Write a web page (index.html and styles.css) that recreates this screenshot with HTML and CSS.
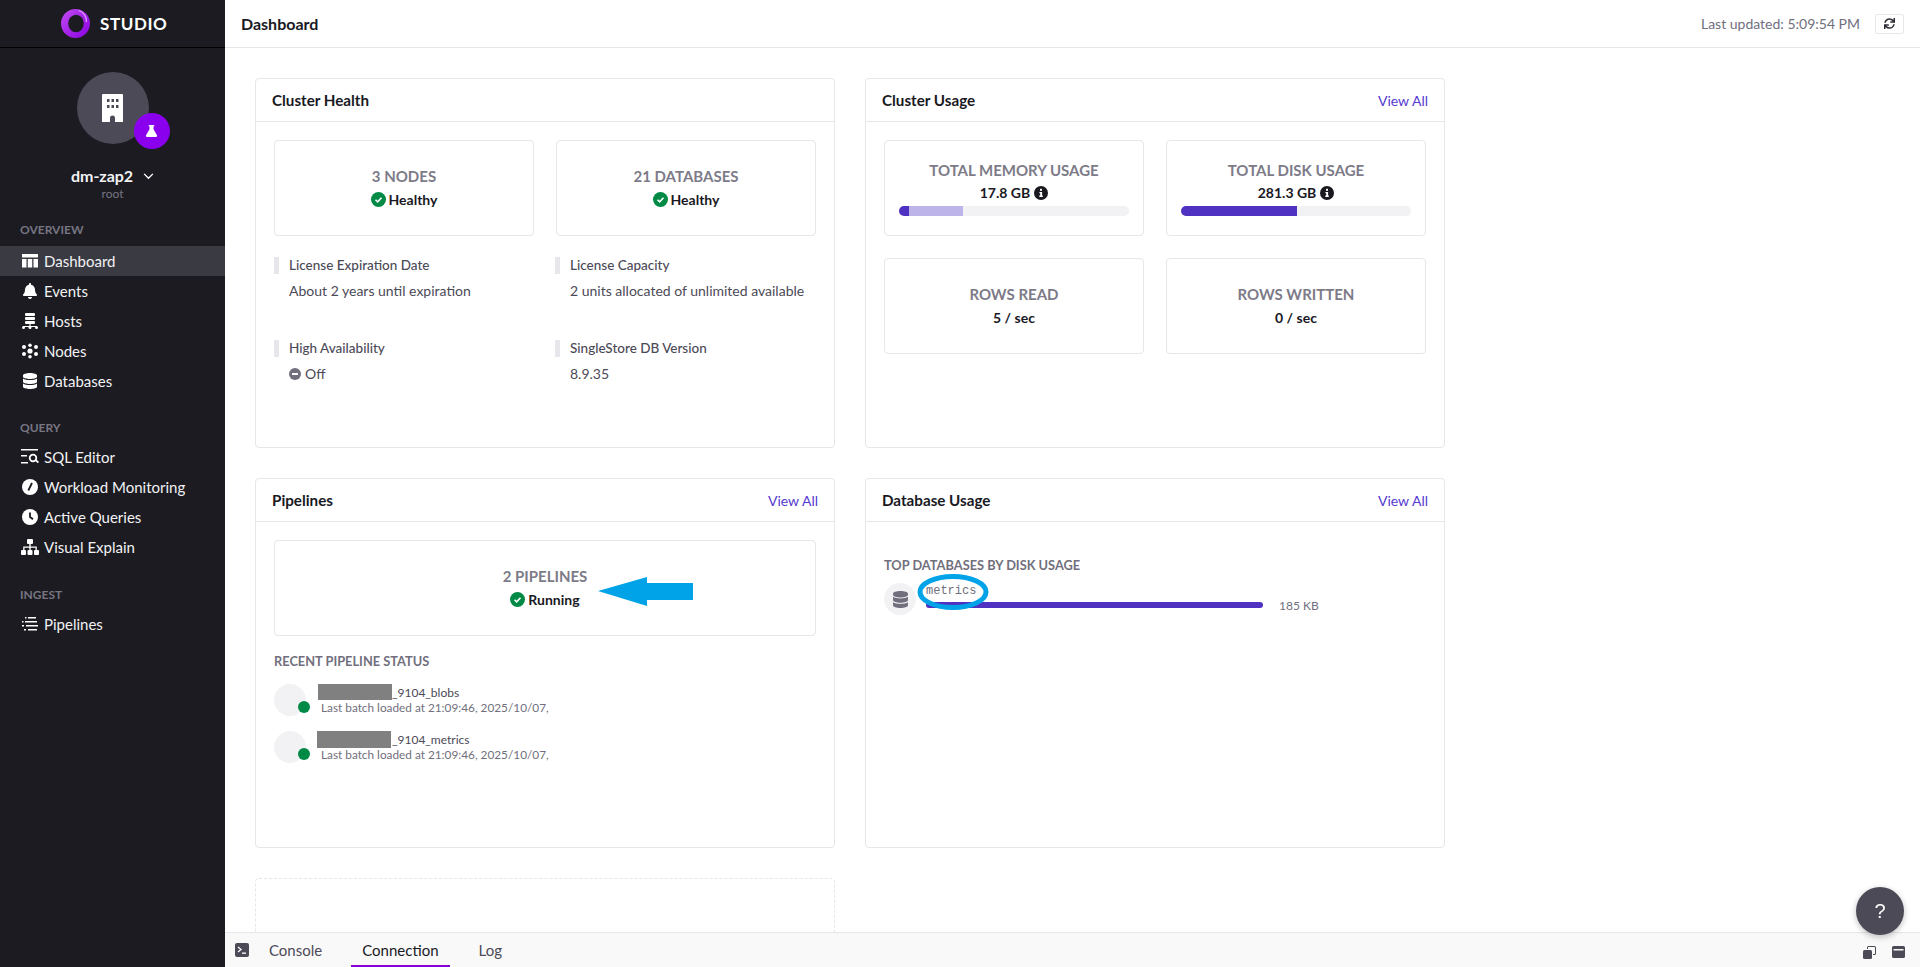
FILE: index.html
```html
<!DOCTYPE html>
<html lang="en">
<head>
    <meta charset="UTF-8">
    <title>Dashboard</title>
    <link rel="stylesheet" href="styles.css">
</head>
<body>
    <svg class="defs" width="0" height="0">
        <symbol id="i-db" viewBox="0 0 448 512"><path d="M448 73.143v45.714C448 159.143 347.667 192 224 192S0 159.143 0 118.857V73.143C0 32.857 100.333 0 224 0s224 32.857 224 73.143zM448 176v102.857C448 319.143 347.667 352 224 352S0 319.143 0 278.857V176c48.125 33.143 136.208 48.572 224 48.572S399.874 209.143 448 176zm0 160v102.857C448 479.143 347.667 512 224 512S0 479.143 0 438.857V336c48.125 33.143 136.208 48.572 224 48.572S399.874 369.143 448 336z"/></symbol>
        <symbol id="i-check" viewBox="0 0 14 14"><circle cx="7" cy="7" r="7" fill="#008a45"/><path d="M4.2 7.2l2 2 3.6-3.9" fill="none" stroke="#fff" stroke-width="1.5"/></symbol>
        <symbol id="i-info" viewBox="0 0 14 14"><circle cx="7" cy="7" r="7" fill="#19191f"/><rect x="6" y="2.8" width="2" height="2" fill="#fff"/><path d="M5.4 6h2.7v3.6h.7v1.3H5.3V9.6h.9V7.3h-.8z" fill="#fff"/></symbol>
    </svg>

    <aside class="sidebar">
        <div class="brand">
            <svg class="brand-logo" viewBox="0 0 28 28">
                <defs><linearGradient id="ring" x1="0" y1="0" x2="1" y2="1"><stop offset="0" stop-color="#c24cf2"/><stop offset="1" stop-color="#8a00e0"/></linearGradient></defs>
                <circle cx="14" cy="14" r="14" fill="url(#ring)"/>
                <ellipse cx="14.500" cy="14" rx="7.500" ry="8.500" fill="#1b1b21"/>
                <path d="M17 1.500c5 1.500 8 6 7.500 11" fill="none" stroke="#e3a6fa" stroke-width="1"/>
            </svg>
            <span class="brand-name">STUDIO</span>
        </div>
        <div class="cluster">
            <div class="avatar">
                <svg class="avatar-icon" viewBox="0 0 21 28" fill="#fff"><path fill-rule="evenodd" d="M1 0h19a1 1 0 0 1 1 1v27H13v-4a2.500 2.500 0 0 0-5 0v4H0V1a1 1 0 0 1 1-1zM5 5v3h2.500V5zm4.500 0v3H12V5zM14 5v3h2.500V5zM5 11v3h2.500v-3zm4.500 0v3H12v-3zm4.500 0v3h2.500v-3z"/></svg>
                <span class="avatar-badge">
                    <svg viewBox="0 0 12 13" width="11" height="12" fill="#fff"><path d="M3 0h6v1.300H8.200v3.400L12 11a1.400 1.400 0 0 1-1.200 2H1.200A1.400 1.400 0 0 1 0 11l3.800-6.300V1.300H3z"/></svg>
                </span>
            </div>
            <div class="cluster-name">dm-zap2
                <svg class="chevron" viewBox="0 0 12 8" width="11" height="7"><path d="M1 1l5 5 5-5" fill="none" stroke="#fff" stroke-width="1.600"/></svg>
            </div>
            <div class="cluster-user">root</div>
        </div>

        <div class="nav-label nav-label-first">OVERVIEW</div>
        <a class="nav-item active">
            <svg viewBox="0 0 16 14" fill="#fff"><path d="M0 0h16v3.500H0zM0 5h4.500v8.500H0zM5.800 5h4.400v8.500H5.800zM11.500 5H16v8.500h-4.500z"/></svg>Dashboard
        </a>
        <a class="nav-item">
            <svg viewBox="0 0 448 512" fill="#fff"><path d="M224 512c35.32 0 63.97-28.65 63.97-64H160.03c0 35.35 28.65 64 63.97 64zm215.39-149.71c-19.32-20.76-55.47-51.99-55.47-154.29 0-77.7-54.48-139.9-127.94-155.16V32c0-17.67-14.32-32-31.98-32s-31.98 14.33-31.98 32v20.84C118.56 68.1 64.08 130.3 64.08 208c0 102.3-36.15 133.53-55.47 154.29-6 6.45-8.66 14.16-8.61 21.71.11 16.4 12.98 32 32.1 32h383.8c19.12 0 32-15.6 32.1-32 .05-7.55-2.61-15.27-8.61-21.71z"/></svg>Events
        </a>
        <a class="nav-item">
            <svg viewBox="0 0 16 16" fill="#fff"><rect x="3" y="0" width="10" height="3" rx="1"/><rect x="3" y="4" width="10" height="3" rx="1"/><rect x="3" y="8" width="10" height="3" rx="1"/><path d="M7.400 11h1.200v2H15v1H1v-1h6.400z"/><circle cx="1.500" cy="14.500" r="1.500"/><circle cx="8" cy="14.500" r="1.500"/><circle cx="14.500" cy="14.500" r="1.500"/></svg>Hosts
        </a>
        <a class="nav-item">
            <svg viewBox="0 0 16 15" fill="#fff"><circle cx="8" cy="7.500" r="2.600"/><circle cx="8" cy="1.800" r="1.800"/><circle cx="8" cy="13.200" r="1.800"/><circle cx="2" cy="3.500" r="2"/><circle cx="14" cy="3.500" r="2"/><circle cx="2" cy="10.500" r="2"/><circle cx="14" cy="10.500" r="2"/></svg>Nodes
        </a>
        <a class="nav-item">
            <svg viewBox="0 0 448 512" fill="#fff"><use href="#i-db"/></svg>Databases
        </a>

        <div class="nav-label nav-label-query">QUERY</div>
        <a class="nav-item">
            <svg class="nav-icon-wide" viewBox="0 0 18 16" fill="#fff"><path d="M0 0h17v1.600H0zM0 6h6v1.600H0zM0 13h7v1.600H0z"/><circle cx="12" cy="9" r="3.300" fill="none" stroke="#fff" stroke-width="1.800"/><path d="M14 11.500l1.300-1.300 2.700 2.800-1.300 1.300z"/></svg>SQL Editor
        </a>
        <a class="nav-item">
            <svg viewBox="0 0 16 16"><circle cx="8" cy="8" r="8" fill="#fff"/><path d="M6.300 11.500L10 4" stroke="#1b1b21" stroke-width="1.800"/></svg>Workload Monitoring
        </a>
        <a class="nav-item">
            <svg viewBox="0 0 16 16"><circle cx="8" cy="8" r="8" fill="#fff"/><path d="M8 3.500V8l3 2.300" fill="none" stroke="#1b1b21" stroke-width="1.800"/></svg>Active Queries
        </a>
        <a class="nav-item">
            <svg class="nav-icon-wide" viewBox="0 0 18 16" fill="#fff"><rect x="6" y="0" width="6" height="5" rx="1"/><rect x="0" y="11" width="5" height="5" rx="1"/><rect x="6.500" y="11" width="5" height="5" rx="1"/><rect x="13" y="11" width="5" height="5" rx="1"/><path d="M8.300 5h1.400v2.500h6.100V11h-1.300V8.800H9.700V11H8.300V8.800H3.500V11H2.200V7.500h6.100z"/></svg>Visual Explain
        </a>

        <div class="nav-label">INGEST</div>
        <a class="nav-item">
            <svg viewBox="0 0 16 14" fill="#fff"><path d="M6 0h8v1.600H6zM3 4h12v1.600H3zM0 8h2v1.600H0zM4 8h12v1.600H4zM2 12h2v1.600H2zM6 12h9v1.600H6zM0 4h1.500v1.600H0zM3 0h1.500v1.600H3z"/></svg>Pipelines
        </a>
    </aside>

    <div class="main">
        <header class="topbar">
            <h1 class="page-title">Dashboard</h1>
            <span class="updated">Last updated: 5:09:54 PM</span>
            <button class="refresh">
                <svg viewBox="0 0 512 512" width="11" height="11" fill="#2a2a33"><path d="M440.65 12.57l4 82.77A247.16 247.16 0 0 0 255.83 8C134.73 8 33.91 94.92 12.29 209.82A12 12 0 0 0 24.09 224h49.05a12 12 0 0 0 11.67-9.26 175.91 175.91 0 0 1 317-56.94l-101.46-4.86a12 12 0 0 0-12.57 12v47.41a12 12 0 0 0 12 12H500a12 12 0 0 0 12-12V12a12 12 0 0 0-12-12h-47.37a12 12 0 0 0-11.98 12.57zM255.83 432a175.61 175.61 0 0 1-146-77.8l101.8 4.87a12 12 0 0 0 12.57-12v-47.4a12 12 0 0 0-12-12H12a12 12 0 0 0-12 12V500a12 12 0 0 0 12 12h47.35a12 12 0 0 0 12-12.6l-4.15-82.57A247.17 247.17 0 0 0 255.83 504c121.11 0 221.93-86.92 243.55-201.82a12 12 0 0 0-11.8-14.18h-49.05a12 12 0 0 0-11.67 9.26A175.86 175.86 0 0 1 255.83 432z"/></svg>
            </button>
        </header>

        <div class="content">
            <div class="grid">
                <section class="card">
                    <div class="card-head"><h2>Cluster Health</h2></div>
                    <div class="card-body">
                        <div class="stats">
                            <div class="stat">
                                <div class="stat-title">3 NODES</div>
                                <div class="stat-value"><svg class="ic-status"><use href="#i-check"/></svg>Healthy</div>
                            </div>
                            <div class="stat">
                                <div class="stat-title">21 DATABASES</div>
                                <div class="stat-value"><svg class="ic-status"><use href="#i-check"/></svg>Healthy</div>
                            </div>
                        </div>
                        <div class="facts">
                            <div class="fact">
                                <div class="fact-label">License Expiration Date</div>
                                <div class="fact-value">About 2 years until expiration</div>
                            </div>
                            <div class="fact">
                                <div class="fact-label">License Capacity</div>
                                <div class="fact-value">2 units allocated of unlimited available</div>
                            </div>
                            <div class="fact">
                                <div class="fact-label">High Availability</div>
                                <div class="fact-value">
                                    <svg class="ic-off" viewBox="0 0 12 12"><circle cx="6" cy="6" r="6" fill="#716f7d"/><rect x="3" y="5" width="6" height="2" fill="#fff"/></svg>Off
                                </div>
                            </div>
                            <div class="fact">
                                <div class="fact-label">SingleStore DB Version</div>
                                <div class="fact-value">8.9.35</div>
                            </div>
                        </div>
                    </div>
                </section>

                <section class="card">
                    <div class="card-head"><h2>Cluster Usage</h2><a class="view-all">View All</a></div>
                    <div class="card-body">
                        <div class="stats">
                            <div class="stat stat-bar">
                                <div class="stat-title">TOTAL MEMORY USAGE</div>
                                <div class="stat-value">17.8 GB <svg class="ic-info"><use href="#i-info"/></svg></div>
                                <div class="bar"><span class="bar-fill fill-dark bar-mem"></span><span class="bar-fill fill-light bar-mem2"></span></div>
                            </div>
                            <div class="stat stat-bar">
                                <div class="stat-title">TOTAL DISK USAGE</div>
                                <div class="stat-value">281.3 GB <svg class="ic-info"><use href="#i-info"/></svg></div>
                                <div class="bar"><span class="bar-fill fill-dark bar-disk"></span></div>
                            </div>
                            <div class="stat">
                                <div class="stat-title">ROWS READ</div>
                                <div class="stat-value">5 / sec</div>
                            </div>
                            <div class="stat">
                                <div class="stat-title">ROWS WRITTEN</div>
                                <div class="stat-value">0 / sec</div>
                            </div>
                        </div>
                    </div>
                </section>

                <section class="card">
                    <div class="card-head"><h2>Pipelines</h2><a class="view-all">View All</a></div>
                    <div class="card-body">
                        <div class="stat stat-wide">
                            <div class="stat-title">2 PIPELINES</div>
                            <div class="stat-value"><svg class="ic-status"><use href="#i-check"/></svg>Running</div>
                            <svg class="mark-arrow" viewBox="0 0 95 29"><path d="M0 14L49 0v6h46v17H49v6z" fill="#00a2e8"/></svg>
                        </div>
                        <div class="section-label recent-label">RECENT PIPELINE STATUS</div>
                        <div class="pipe">
                            <span class="pipe-icon"><i class="pipe-dot"></i></span>
                            <div class="pipe-text">
                                <div class="pipe-name"><span class="redact"></span>_9104_blobs</div>
                                <div class="pipe-sub">Last batch loaded at 21:09:46, 2025/10/07,</div>
                            </div>
                        </div>
                        <div class="pipe">
                            <span class="pipe-icon"><i class="pipe-dot"></i></span>
                            <div class="pipe-text">
                                <div class="pipe-name"><span class="redact redact-tall"></span>_9104_metrics</div>
                                <div class="pipe-sub">Last batch loaded at 21:09:46, 2025/10/07,</div>
                            </div>
                        </div>
                    </div>
                </section>

                <section class="card">
                    <div class="card-head"><h2>Database Usage</h2><a class="view-all">View All</a></div>
                    <div class="card-body db-body">
                        <div class="section-label">TOP DATABASES BY DISK USAGE</div>
                        <div class="db-row">
                            <span class="db-icon"><svg viewBox="0 0 448 512" width="15" height="17" fill="#716f7d"><use href="#i-db"/></svg></span>
                            <div class="db-main">
                                <div class="db-name">metrics</div>
                                <div class="db-bar"></div>
                            </div>
                            <span class="db-size">185 KB</span>
                            <svg class="mark-ellipse" viewBox="0 0 72 36"><ellipse cx="36" cy="18" rx="33" ry="15.500" fill="none" stroke="#00a2e8" stroke-width="5"/></svg>
                        </div>
                    </div>
                </section>

                <section class="card-empty"></section>
            </div>
        </div>

        <footer class="dock">
            <svg class="dock-term" viewBox="0 0 14 14"><rect width="14" height="14" rx="2" fill="#4c4a57"/><path d="M3 4l3 2.500L3 9" fill="none" stroke="#fff" stroke-width="1.300"/><rect x="7" y="9.500" width="4" height="1.300" fill="#fff"/></svg>
            <a class="dock-tab">Console</a>
            <a class="dock-tab current">Connection</a>
            <a class="dock-tab">Log</a>
            <span class="dock-right">
                <svg viewBox="0 0 13 13" width="13" height="13" fill="#4c4a57"><rect x="0" y="4" width="9" height="9" rx="1.500"/><path d="M4 3V1.500A1.500 1.500 0 0 1 5.500 0h6A1.500 1.500 0 0 1 13 1.500v6A1.500 1.500 0 0 1 11.500 9H10V8h1.500a.5.5 0 0 0 .5-.5v-6a.5.5 0 0 0-.5-.5h-6a.5.5 0 0 0-.5.5V3z"/></svg>
                <svg viewBox="0 0 13 12" width="13" height="12" fill="#4c4a57"><path fill-rule="evenodd" d="M1.500 0h10A1.500 1.500 0 0 1 13 1.500v9a1.500 1.500 0 0 1-1.500 1.500h-10A1.500 1.500 0 0 1 0 10.500v-9A1.500 1.500 0 0 1 1.500 0zM1.500 3v1.500h10V3z"/></svg>
            </span>
        </footer>
    </div>

    <button class="help">?</button>
</body>
</html>
```

FILE: styles.css
```css
* {
    margin: 0;
    padding: 0;
    box-sizing: border-box;
}
html, body {
    height: 100%;
    overflow: hidden;
}
body {
    display: flex;
    font-family: "Lato", "Liberation Sans", sans-serif;
    font-size: 14px;
    color: #19191f;
    background: #fff;
}
.defs {
    position: absolute;
}

/* sidebar */
.sidebar {
    width: 225px;
    flex: none;
    background: #1b1b21;
    color: #fff;
}
.brand {
    height: 48px;
    border-bottom: 1px solid #000;
    display: flex;
    align-items: center;
    padding-left: 61px;
}
.brand-logo {
    width: 29px;
    height: 29px;
}
.brand-name {
    margin-left: 10px;
    font-size: 17px;
    font-weight: 700;
    letter-spacing: 0.6px;
}
.cluster {
    display: flex;
    flex-direction: column;
    align-items: center;
    padding-top: 24px;
}
.avatar {
    position: relative;
    width: 72px;
    height: 72px;
    border-radius: 50%;
    background: #4c4a57;
    display: flex;
    align-items: center;
    justify-content: center;
}
.avatar-icon {
    width: 21px;
    height: 28px;
}
.avatar-badge {
    position: absolute;
    left: 57px;
    top: 41px;
    width: 36px;
    height: 36px;
    border-radius: 50%;
    background: #8a00ee;
    display: flex;
    align-items: center;
    justify-content: center;
}
.cluster-name {
    margin-top: 22px;
    font-size: 16px;
    font-weight: 700;
    line-height: 20px;
    color: #f2f2f4;
}
.chevron {
    margin-left: 6px;
    vertical-align: 2px;
}
.cluster-user {
    font-size: 12px;
    line-height: 16px;
    color: #777582;
}
.nav-label {
    font-size: 12px;
    font-weight: 700;
    line-height: 16px;
    color: #777582;
    padding-left: 20px;
    margin: 25px 0 6px;
}
.nav-label-first {
    margin: 20px 0 8px;
}
.nav-label-query {
    margin-top: 24px;
}
.nav-item {
    display: flex;
    align-items: center;
    height: 30px;
    padding-left: 44px;
    position: relative;
    font-size: 15px;
    color: #f2f2f4;
}
.nav-item svg {
    position: absolute;
    left: 22px;
    top: 7px;
    width: 16px;
    height: 16px;
}
.nav-item .nav-icon-wide {
    left: 21px;
    width: 18px;
}
.nav-item.active {
    background: #3a3a43;
}

/* top bar */
.main {
    flex: 1;
    min-width: 0;
    display: flex;
    flex-direction: column;
}
.topbar {
    height: 48px;
    flex: none;
    border-bottom: 1px solid #e6e6eb;
    display: flex;
    align-items: center;
    padding: 0 16px 0 16px;
}
.page-title {
    font-size: 16px;
    font-weight: 700;
    margin-right: auto;
}
.updated {
    font-size: 14px;
    color: #716f7d;
}
.refresh {
    margin-left: 15px;
    width: 29px;
    height: 20px;
    border: 1px solid #e6e6eb;
    border-radius: 2px;
    background: #fff;
    display: flex;
    align-items: center;
    justify-content: center;
}

/* cards */
.content {
    flex: 1;
    min-height: 0;
    overflow: hidden;
    padding: 30px 0 0 30px;
}
.grid {
    display: grid;
    grid-template-columns: 580px 580px;
    grid-template-rows: 370px 370px 200px;
    gap: 30px;
}
.card {
    border: 1px solid #e6e6eb;
    border-radius: 4px;
    background: #fff;
}
.card-empty {
    border: 1px dashed #e6e6eb;
    border-radius: 4px;
}
.card-head {
    height: 43px;
    border-bottom: 1px solid #e6e6eb;
    display: flex;
    align-items: center;
    justify-content: space-between;
    padding: 0 16px;
}
.card-head h2 {
    font-size: 15.2px;
    font-weight: 700;
}
.view-all {
    font-size: 14px;
    color: #553acf;
}
.card-body {
    padding: 18px;
}
.stats {
    display: grid;
    grid-template-columns: 260px 260px;
    column-gap: 22px;
    row-gap: 22px;
}
.stat {
    position: relative;
    height: 96px;
    border: 1px solid #e6e6eb;
    border-radius: 4px;
    display: flex;
    flex-direction: column;
    align-items: center;
    justify-content: center;
}
.stat-bar {
    justify-content: flex-start;
    padding: 18px 14px 0;
}
.stat-bar .stat-title {
    line-height: 22px;
}
.stat-title {
    font-size: 15px;
    line-height: 23px;
    font-weight: 700;
    color: #7d7b88;
}
.stat-value {
    display: flex;
    align-items: center;
    font-size: 14px;
    line-height: 23px;
    font-weight: 700;
}
.ic-status {
    width: 15px;
    height: 15px;
    margin-right: 3px;
}
.ic-info {
    width: 14px;
    height: 14px;
    margin-left: 4px;
}
.bar {
    position: relative;
    display: flex;
    align-self: stretch;
    height: 10px;
    margin-top: 2px;
    border-radius: 5px;
    background: #f2f2f4;
    overflow: hidden;
}
.bar-fill {
    height: 100%;
}
.fill-dark {
    background: #4f32c2;
}
.fill-light {
    background: #bdb4e9;
}
.bar-mem {
    width: 10px;
}
.bar-mem2 {
    width: 54px;
}
.bar-disk {
    width: 116px;
}

/* health facts */
.facts {
    display: grid;
    grid-template-columns: 281px 281px;
    margin-top: 21px;
    grid-auto-rows: 83px;
}
.fact-label {
    border-left: 5px solid #e6e6eb;
    padding-left: 10px;
    font-size: 13.500px;
    line-height: 17px;
    font-weight: 500;
    color: #4c4a57;
}
.fact-value {
    display: flex;
    align-items: center;
    margin: 7px 0 0 15px;
    font-size: 14px;
    line-height: 20px;
    color: #4c4a57;
}
.ic-off {
    width: 12px;
    height: 12px;
    margin-right: 4px;
}

/* pipelines */
.stat-wide {
    width: 542px;
}
.mark-arrow {
    position: absolute;
    left: 323px;
    top: 36px;
    width: 95px;
    height: 29px;
}
.section-label {
    font-size: 12.800px;
    font-weight: 700;
    line-height: 16px;
    color: #716f7d;
}
.recent-label {
    margin: 17px 0 15px;
}
.pipe {
    display: flex;
    height: 32px;
    margin-bottom: 15px;
}
.pipe-icon {
    position: relative;
    flex: none;
    width: 32px;
    height: 32px;
    border-radius: 50%;
    background: #f2f2f4;
}
.pipe-dot {
    position: absolute;
    left: 24px;
    top: 17px;
    width: 12px;
    height: 12px;
    border-radius: 50%;
    background: #008a45;
}
.pipe-text {
    margin-left: 12px;
}
.pipe-name {
    display: flex;
    align-items: center;
    height: 16px;
    font-size: 12px;
    color: #4c4a57;
}
.redact {
    width: 74px;
    height: 16px;
    background: #808080;
}
.redact-tall {
    height: 17px;
    margin-left: -1px;
    margin-right: 1px;
}
.pipe-sub {
    margin-left: 3px;
    font-size: 11.800px;
    line-height: 15px;
    color: #716f7d;
}

/* database usage */
.db-body {
    padding-top: 35px;
}
.db-row {
    position: relative;
    display: flex;
    margin-top: 10px;
}
.db-icon {
    flex: none;
    width: 32px;
    height: 32px;
    border-radius: 50%;
    background: #f2f2f4;
    display: flex;
    align-items: center;
    justify-content: center;
}
.db-main {
    margin-left: 10px;
    width: 337px;
}
.db-name {
    font-family: "Liberation Mono", "DejaVu Sans Mono", monospace;
    font-size: 12px;
    line-height: 16px;
    color: #716f7d;
}
.db-bar {
    height: 6px;
    margin-top: 3px;
    border-radius: 3px;
    background: #4f32c2;
}
.db-size {
    margin: 15px 0 0 16px;
    font-size: 12px;
    line-height: 16px;
    color: #716f7d;
}
.mark-ellipse {
    position: absolute;
    left: 33px;
    top: -9px;
    width: 72px;
    height: 36px;
}

/* dock */
.dock {
    height: 35px;
    flex: none;
    border-top: 1px solid #e6e6eb;
    background: #f9f9fa;
    display: flex;
    align-items: stretch;
    padding-left: 10px;
    font-size: 15px;
    color: #4c4a57;
}
.dock-term {
    width: 14px;
    height: 14px;
    margin: 10px 9px 0 0;
}
.dock-tab {
    display: flex;
    align-items: center;
    padding: 2px 11px 0;
    margin-right: 18px;
    border-bottom: 2px solid transparent;
}
.dock-tab.current {
    color: #19191f;
    border-bottom-color: #8a00d4;
}
.dock-right {
    margin-left: auto;
    display: flex;
    align-items: center;
    gap: 16px;
    padding: 4px 15px 0 0;
}

.help {
    position: fixed;
    left: 1856px;
    top: 887px;
    width: 48px;
    height: 48px;
    border: 0;
    border-radius: 50%;
    background: #4c4a57;
    color: #fff;
    font-family: "Liberation Sans", sans-serif;
    font-size: 20px;
    box-shadow: 0 2px 6px rgba(0, 0, 0, 0.25);
}
```
